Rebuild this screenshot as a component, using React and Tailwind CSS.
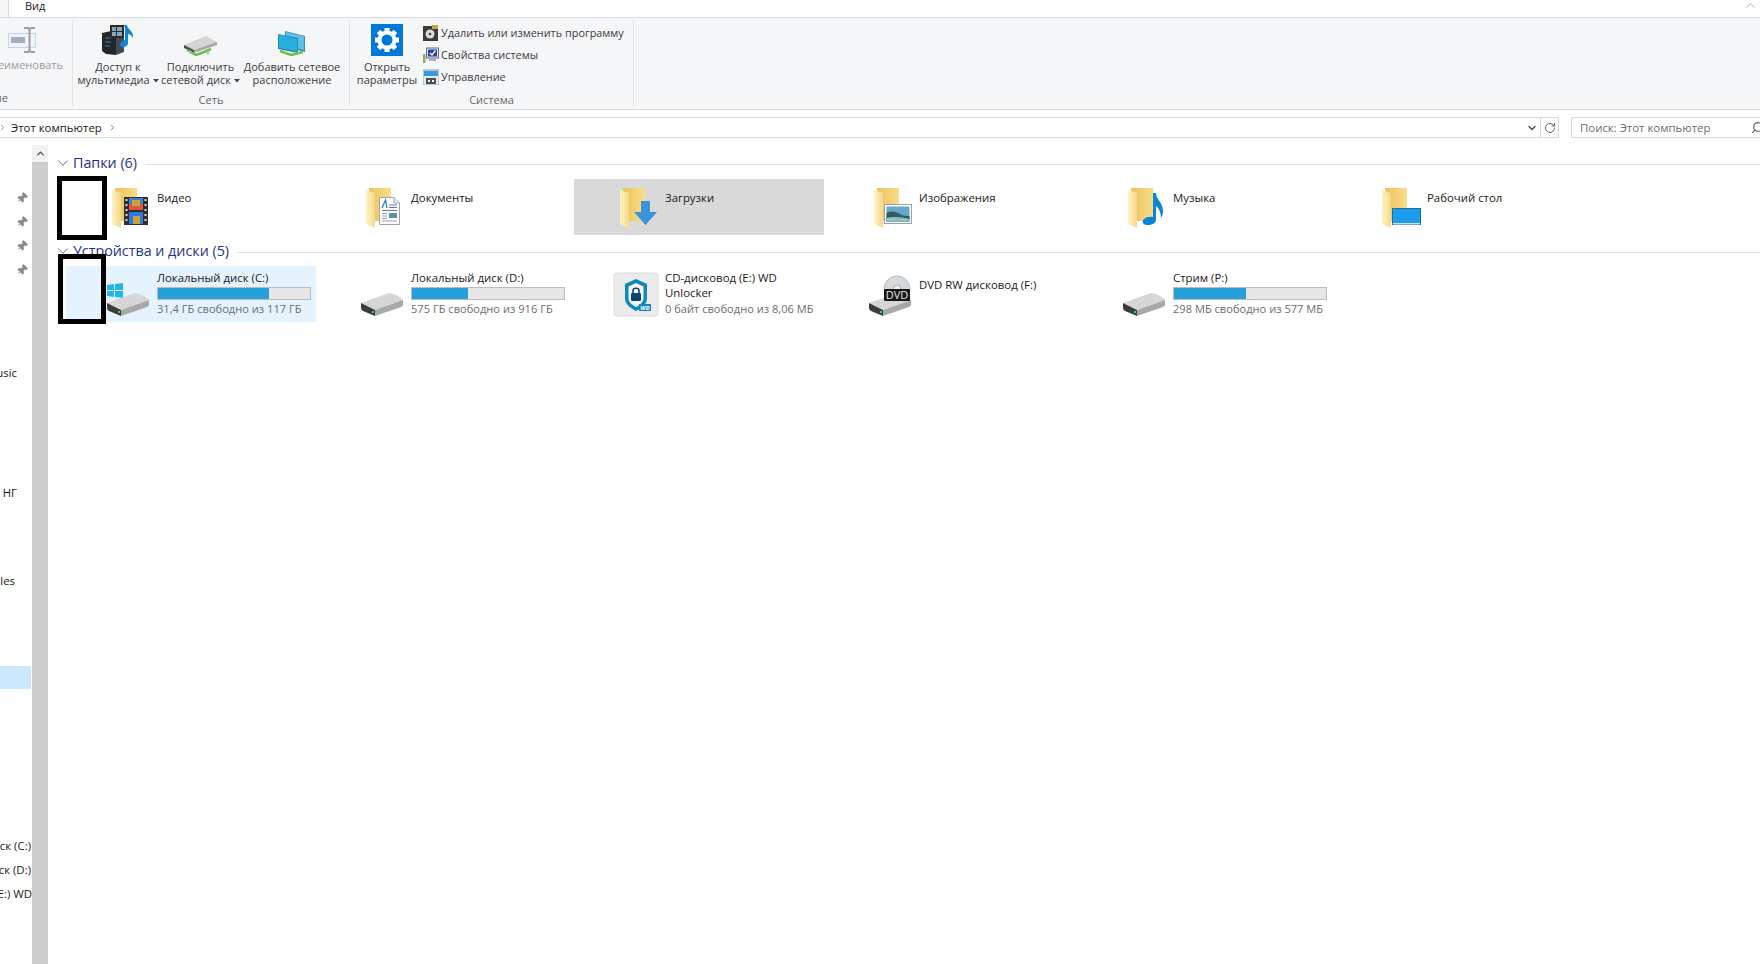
import React from 'react';
import { ChevronDown, ChevronRight, ChevronUp, RotateCw, Search, Pin } from 'lucide-react';

const FONT = 'font-["Open_Sans","Liberation_Sans",sans-serif]';

// --- icons -------------------------------------------------------------

const FolderBase = ({ id }) => (
  <>
    <defs>
      <linearGradient id={`back-${id}`} x1="0" y1="0" x2="1" y2="0">
        <stop offset="0" stopColor="#ecc25c" />
        <stop offset="1" stopColor="#f8dd8a" />
      </linearGradient>
      <linearGradient id={`leaf-${id}`} x1="0" y1="0" x2="1" y2="0">
        <stop offset="0" stopColor="#fff3c4" />
        <stop offset="1" stopColor="#f6d988" />
      </linearGradient>
    </defs>
    <path d="M9 5H31V38H9z" fill={`url(#back-${id})`} />
    <path d="M6 7 15 10V45L6 41z" fill={`url(#leaf-${id})`} />
  </>
);

const VideoFolder = () => (
  <svg width="48" height="48" viewBox="0 0 48 48">
    <FolderBase id="video" />
    <rect x="18" y="14" width="24" height="28" fill="#2e2e2e" />
    <path d="M23 15H37V27H23z" fill="#3f7fd0" />
    <path d="M23 21H37V27H23z" fill="#e0563f" />
    <path d="M23 29H37V41H23z" fill="#2f78e0" />
    <path d="M26 17h8v6h-8zM27 33h7v8h-7z" fill="#c9a23a" />
    <path d="M19.500 16h2v2h-2zM19.500 21h2v2h-2zM19.500 26h2v2h-2zM19.500 31h2v2h-2zM19.500 36h2v2h-2zM38.500 16h2v2h-2zM38.500 21h2v2h-2zM38.500 26h2v2h-2zM38.500 31h2v2h-2zM38.500 36h2v2h-2z" fill="#d8d8d8" />
  </svg>
);

const DocsFolder = () => (
  <svg width="48" height="48" viewBox="0 0 48 48">
    <FolderBase id="docs" />
    <path d="M19.500 14.500H34L39.500 20V41.500H19.500z" fill="#fff" stroke="#9aa4ac" />
    <path d="M34 14.500V20H39.500" fill="#e8eef2" stroke="#9aa4ac" />
    <path d="M22 25 25.500 17 27 25" fill="none" stroke="#1f86c8" strokeWidth="1.300" />
    <path d="M29 22h8M29 24.500h8M22 27.500h15" stroke="#5d7f95" strokeWidth="1" />
    <rect x="29" y="30" width="8" height="5" fill="#5f8fa8" />
    <path d="M22 30.500h5M22 33h5M22 35.500h5M22 38h15" stroke="#8aa0ae" strokeWidth="1" />
  </svg>
);

const DownloadsFolder = () => (
  <svg width="48" height="48" viewBox="0 0 48 48">
    <FolderBase id="down" />
    <path d="M27 18H36V29H43L31.500 42 20 29H27z" fill="#3b93dc" />
  </svg>
);

const ImagesFolder = () => (
  <svg width="48" height="48" viewBox="0 0 48 48">
    <FolderBase id="img" />
    <rect x="16.500" y="21.500" width="27" height="19" fill="#fff" stroke="#9aa0a6" />
    <rect x="18.500" y="23.500" width="23" height="15" fill="#6aa6cc" />
    <path d="M18.500 30C24 27 28 29 32 31S38 33 41.500 33V38.500H18.500z" fill="#2f5f5c" />
    <path d="M18.500 35C26 33 33 34 41.500 36V38.500H18.500z" fill="#8fc0cc" />
  </svg>
);

const MusicFolder = () => (
  <svg width="48" height="48" viewBox="0 0 48 48">
    <FolderBase id="music" />
    <path d="M31 10H34C34 16 41 20 41 28 41 31 40 33 39 35 39 30 37 25 34 23V37C34 40 30 42 25 42 21 42 20 39 21 37 23 34 28 33 31 34z" fill="#0a84d6" />
  </svg>
);

const DesktopFolder = () => (
  <svg width="48" height="48" viewBox="0 0 48 48">
    <FolderBase id="desk" />
    <rect x="16" y="25" width="29" height="17" fill="#1f6f92" />
    <rect x="17" y="26" width="27" height="14" fill="#1c9cf0" />
    <path d="M17 40h27v1.500H17z" fill="#cfe4f0" />
  </svg>
);

const DriveShape = ({ y = 0 }) => (
  <g transform={`translate(1 ${y})`}>
    <path d="M0 10 28 0C34 1 40 4 42 7L14 17z" fill="#d6d6d6" />
    <path d="M0 10 14 17V23L2 18Q0 17 0 15z" fill="#3c3c3c" />
    <path d="M14 17 42 7V12Q42 13 40 14L14 23z" fill="#a8a8a8" />
    <rect x="11" y="18" width="2" height="2" fill="#3fd07a" />
  </g>
);

const DriveIcon = ({ windows }) => (
  <svg width="48" height="48" viewBox="0 0 48 48">
    {windows && <path d="M1 11 8 10V16H1zM9 10 17 9V16H9zM1 17H8V23L1 22zM9 17H17V24L9 23z" fill="#21b5ee" />}
    <DriveShape y={19} />
  </svg>
);

const WdIcon = () => (
  <svg width="48" height="48" viewBox="0 0 48 48" className="overflow-visible">
    <g transform="translate(-1 -3)">
      <rect x="1" y="2" width="44" height="43" rx="3" fill="#ebebeb" stroke="#dcdcdc" />
      <path d="M23 8 34 13V27C34 33 29 37 23 40 17 37 12 33 12 27V13z" fill="#0f87c0" />
      <path d="M23 12 30.500 15.500V27C30.500 31 27 34 23 36 19 34 15.500 31 15.500 27V15.500z" fill="#f4f6f7" />
      <rect x="18" y="22" width="10" height="8" rx="1" fill="#11436f" />
      <path d="M20 22V19.500C20 16.500 26 16.500 26 19.500V22" fill="none" stroke="#11436f" strokeWidth="1.600" />
      <rect x="26" y="33" width="12" height="7" fill="#0f87c0" />
      <text x="32" y="39" fontSize="6" fontWeight="700" fontStyle="italic" fill="#fff" textAnchor="middle" fontFamily="Open Sans, sans-serif">WD</text>
    </g>
  </svg>
);

const DvdIcon = () => (
  <svg width="48" height="48" viewBox="0 0 48 48">
    <circle cx="29" cy="15" r="13" fill="#d6d9dc" stroke="#b9bdc0" />
    <circle cx="29" cy="15" r="4" fill="#eef0f1" stroke="#a9adb0" />
    <DriveShape y={19} />
    <rect x="16" y="15" width="26" height="12" rx="1" fill="#171717" />
    <text x="29" y="25" fontSize="11" fill="#e8e8e8" textAnchor="middle" fontFamily="Open Sans, sans-serif">DVD</text>
  </svg>
);

const RenameIcon = () => (
  <svg width="32" height="28" viewBox="0 0 32 28" className="opacity-85">
    <rect x="1.500" y="7.500" width="27" height="14" fill="#eef3fa" stroke="#bccde3" />
    <rect x="4" y="11" width="14" height="6" fill="#93a3bb" />
    <path d="M17 2h4l1.500 1.500L24 2h4M22.500 3v21M17 26h4l1.500-1.500L24 26h4" fill="none" stroke="#8b9095" strokeWidth="2" />
  </svg>
);

const MediaIcon = () => (
  <svg width="32" height="32" viewBox="0 0 32 32">
    <path d="M0 9 14 6V31L4 30 0 27z" fill="#23272c" />
    <path d="M14 6 22 9V28L14 31z" fill="#454b52" />
    <path d="M3 14h6M3 18h6M3 22h5" stroke="#3d7fb5" strokeWidth="1" />
    <rect x="8" y="1" width="14" height="13" fill="#2b2b2b" />
    <path d="M10 3h4v4h-4zM15 3h5v4h-5zM10 8h4v4h-4zM15 8h5v4h-5z" fill="#8aa7c0" />
    <path d="M22 1H25C25 5 32 7 31 14 29.500 11 27 10 26 10V19C26 22 22 24 19 23 17 21 19 17 23 16V4z" fill="#0f86d8" />
  </svg>
);

const ConnectDriveIcon = () => (
  <svg width="34" height="32" viewBox="0 0 34 32">
    <path d="M0 21 22 12 33 18 10 26z" fill="#d4d4d4" />
    <path d="M0 21 10 26V29L0 24z" fill="#4a4a4a" />
    <path d="M10 26 33 18V21L10 29z" fill="#a8a8a8" />
    <path d="M3 26 12 31 20 28 27 25" fill="none" stroke="#6cc04a" strokeWidth="2.500" />
    <circle cx="6" cy="28" r="1.500" fill="#b9b9b9" />
    <circle cx="24" cy="29" r="1.500" fill="#b9b9b9" />
  </svg>
);

const NetworkIcon = () => (
  <svg width="30" height="32" viewBox="0 0 30 32">
    <path d="M8 7 28 12V28L8 23z" fill="#3f8fb0" />
    <path d="M9 8 27 12.500V26L9 21.500z" fill="#5cc1e8" />
    <path d="M1 10 21 14V29L1 25z" fill="#2a86ae" />
    <path d="M2 11 20 14.700V27.500L2 23.700z" fill="#29aee0" />
    <path d="M3 27 14 31 26 28" fill="none" stroke="#6cc04a" strokeWidth="2.500" />
  </svg>
);

const GearIcon = () => {
  const teeth = [0, 45, 90, 135, 180, 225, 270, 315];
  return (
    <svg width="32" height="32" viewBox="0 0 32 32">
      <rect width="32" height="32" fill="#0078d7" />
      <circle cx="16" cy="16" r="7.500" fill="none" stroke="#fff" strokeWidth="4" />
      {teeth.map((deg) => (
        <rect key={deg} x="13.500" y="4" width="5" height="5" fill="#fff" transform={`rotate(${deg} 16 16)`} />
      ))}
    </svg>
  );
};

const UninstallIcon = () => (
  <svg width="16" height="16" viewBox="0 0 16 16">
    <rect x="0" y="1" width="15" height="15" fill="#3a3a3a" />
    <path d="M9 0h6v4H9z" fill="#c9a04a" />
    <circle cx="7" cy="9" r="4.500" fill="#d9d9d9" />
    <circle cx="7" cy="9" r="1.300" fill="#3a3a3a" />
  </svg>
);

const SystemIcon = () => (
  <svg width="16" height="16" viewBox="0 0 16 16">
    <rect x="3.500" y="1" width="12" height="10" fill="#dfe6f2" stroke="#5f6e86" />
    <rect x="5" y="2.500" width="9" height="7" fill="#2a3fa8" />
    <path d="M7 6 9 8 12.500 3.500" fill="none" stroke="#fff" strokeWidth="1.300" />
    <path d="M6 12h7v2H6z" fill="#a9b0b8" />
    <rect x="0" y="7" width="2.500" height="9" fill="#8fae5c" />
  </svg>
);

const ManageIcon = () => (
  <svg width="16" height="16" viewBox="0 0 16 16">
    <rect x="0" y="1" width="16" height="15" fill="#e4eef7" stroke="#7f9fb8" />
    <rect x="1" y="2" width="14" height="5" fill="#3c96d8" />
    <rect x="3" y="9" width="10" height="6" fill="#4a4f55" />
    <path d="M5 11h2v2H5zM9 11h2v2H9z" fill="#fff" />
  </svg>
);

const Caret = () => (
  <svg width="6" height="4" viewBox="0 0 6 4" className="ml-[3px] inline-block align-middle">
    <path d="M0 0H6L3 3.500z" fill="#444" />
  </svg>
);

// --- ribbon ------------------------------------------------------------

const RibbonButton = ({ icon, lines, caret, className = 'w-[84px]' }) => (
  <div className={`flex flex-col items-center ${className}`}>
    <div className="h-[32px] mt-[6px] flex items-end justify-center">{icon}</div>
    <div className="mt-[4px] text-center leading-[13px] whitespace-nowrap text-[#3c3c3c]">
      {lines.map((l, i) => (
        <div key={i}>
          {l}
          {caret && i === lines.length - 1 && <Caret />}
        </div>
      ))}
    </div>
  </div>
);

const Ribbon = () => (
  <div className="h-[92px] flex shrink-0 bg-[#f5f6f7] border-b border-[#dadbdc] text-[11px]">
    <div className="w-[73px] shrink-0 flex flex-col border-r border-[#e2e4e7] mt-[2px] mb-[3px] overflow-hidden">
      <div className="h-[69px] flex flex-col -mt-[2px]">
        <div className="h-[32px] mt-[8px] pl-[7px]">
          <RenameIcon />
        </div>
        <div className="flex justify-end pr-[9px] text-[#9c9c9c] leading-[13px] whitespace-nowrap">
          <span className="shrink-0">Переименовать</span>
        </div>
      </div>
      <div className="flex justify-end pr-[64px] mt-[5px] text-[#666] leading-[16px] whitespace-nowrap">
        <span className="shrink-0">Расположение</span>
      </div>
    </div>

    <div className="w-[277px] shrink-0 flex flex-col border-r border-[#e2e4e7] mt-[2px] mb-[3px]">
      <div className="h-[69px] flex pl-[3px] -mt-[2px]">
        <RibbonButton icon={<MediaIcon />} lines={['Доступ к', 'мультимедиа']} caret />
        <RibbonButton icon={<ConnectDriveIcon />} lines={['Подключить', 'сетевой диск']} caret className="w-[81px]" />
        <RibbonButton icon={<NetworkIcon />} lines={['Добавить сетевое', 'расположение']} className="w-[102px]" />
      </div>
      <div className="mt-[6px] text-center text-[#666] leading-[16px]">Сеть</div>
    </div>

    <div className="w-[284px] shrink-0 flex flex-col border-r border-[#e2e4e7] mt-[2px] mb-[3px]">
      <div className="h-[69px] flex pl-[7px] -mt-[2px]">
        <RibbonButton icon={<GearIcon />} lines={['Открыть', 'параметры']} className="w-[60px]" />
        <div className="ml-[6px] pt-[4px] flex flex-col text-[#3c3c3c] text-[10.900px]">
          {[
            [<UninstallIcon key="u" />, 'Удалить или изменить программу'],
            [<SystemIcon key="s" />, 'Свойства системы'],
            [<ManageIcon key="m" />, 'Управление'],
          ].map(([icon, label]) => (
            <div key={label} className="h-[22px] shrink-0 flex items-center gap-[2px] whitespace-nowrap">
              {icon}
              {label}
            </div>
          ))}
        </div>
      </div>
      <div className="mt-[5px] text-center text-[#666] leading-[16px]">Система</div>
    </div>
  </div>
);

// --- address bar -------------------------------------------------------

const AddressBar = () => (
  <div className="shrink-0 flex mt-[7px] h-[21px] text-[11.400px]">
    <div className="flex-1 flex items-center border-y border-r border-[#d9d9d9]">
      <ChevronRight size={9} strokeWidth={2} className="text-[#777] -ml-[2px] mr-[3px]" />
      <span className="text-[#1a1a1a] ml-[1px]">Этот компьютер</span>
      <ChevronRight size={9} strokeWidth={2} className="text-[#555] ml-[6px]" />
      <ChevronDown size={12} strokeWidth={3} className="ml-auto mr-[2px] text-[#555]" />
      <div className="h-full border-l border-[#d9d9d9] w-[18px] flex items-center justify-center">
        <RotateCw size={12} strokeWidth={2} className="text-[#666]" />
      </div>
    </div>
    <div className="ml-[12px] w-[189px] flex items-center border-y border-l border-[#d9d9d9] pl-[8px] overflow-hidden">
      <span className="text-[#6d6d6d]">Поиск: Этот компьютер</span>
      <Search size={13} strokeWidth={2} className="ml-auto -mr-[4px] -scale-x-100 text-[#555]" />
    </div>
  </div>
);

// --- left pane ---------------------------------------------------------

const ClippedRow = ({ children, className = '' }) => (
  <div className={`h-[24px] flex items-center justify-end overflow-hidden whitespace-nowrap text-[#1a1a1a] ${className}`}>
    <span className="shrink-0">{children}</span>
  </div>
);

const Sidebar = () => (
  <div className="w-[32px] shrink-0 flex flex-col text-[11.400px]">
    <div className="mt-[48px] flex flex-col items-end pr-[4px]">
      {[0, 1, 2, 3].map((i) => (
        <div key={i} className="h-[24px] flex items-center">
          <Pin size={12} fill="#8a8a8a" strokeWidth={1.500} className="text-[#8a8a8a] rotate-45" />
        </div>
      ))}
    </div>
    <ClippedRow className="mt-[79px] pr-[15px]">Music</ClippedRow>
    <ClippedRow className="mt-[96px] pr-[15px]">НГ</ClippedRow>
    <ClippedRow className="mt-[64px] pr-[17px]">les</ClippedRow>
    <div className="mt-[73px] h-[23px] mr-[1px] bg-[#cce8ff]" />
    <ClippedRow className="mt-[145px] pr-[1px]">Локальный диск (C:)</ClippedRow>
    <ClippedRow className="pr-[1px]">Локальный диск (D:)</ClippedRow>
    <ClippedRow className="pr-[0px]">CD-дисковод (E:) WD</ClippedRow>
  </div>
);

const Scrollbar = () => (
  <div className="w-[16px] shrink-0 flex flex-col pt-[7px]">
    <div className="h-[17px] bg-[#f1f1f1] flex items-center justify-center">
      <ChevronUp size={11} strokeWidth={3} className="text-[#505050]" />
    </div>
    <div className="flex-1 bg-[#cdcdcd]" />
  </div>
);

// --- content -----------------------------------------------------------

const SectionHeader = ({ children, className = '' }) => (
  <div className={`h-[22px] flex items-center pl-[6px] ${className}`}>
    <ChevronDown size={18} strokeWidth={1.100} className="text-[#3c4c66] -mt-[2px]" />
    <span className="ml-[1px] -mt-[2px] text-[14.300px] text-[#1e3287] whitespace-nowrap">{children}</span>
    <div className="flex-1 ml-[8px] h-px bg-[#e2e2e2]" />
  </div>
);

const folders = [
  { name: 'Видео', icon: <VideoFolder /> },
  { name: 'Документы', icon: <DocsFolder /> },
  { name: 'Загрузки', icon: <DownloadsFolder />, hovered: true },
  { name: 'Изображения', icon: <ImagesFolder /> },
  { name: 'Музыка', icon: <MusicFolder /> },
  { name: 'Рабочий стол', icon: <DesktopFolder /> },
];

const drives = [
  { name: 'Локальный диск (C:)', free: '31,4 ГБ свободно из 117 ГБ', used: 73, icon: <DriveIcon windows />, selected: true },
  { name: 'Локальный диск (D:)', free: '575 ГБ свободно из 916 ГБ', used: 37, icon: <DriveIcon /> },
  { name: 'CD-дисковод (E:) WD Unlocker', free: '0 байт свободно из 8,06 МБ', icon: <WdIcon /> },
  { name: 'DVD RW дисковод (F:)', icon: <DvdIcon /> },
  { name: 'Стрим (P:)', free: '298 МБ свободно из 577 МБ', used: 47.500, icon: <DriveIcon /> },
];

const FolderTile = ({ name, icon, hovered }) => (
  <div className={`h-[56px] flex pl-[40px] ${hovered ? 'bg-[#d9d9d9]' : ''}`}>
    <div className="w-[48px] mt-[4px] shrink-0">{icon}</div>
    <div className="ml-[3px] pt-[11px] text-[#1a1a1a] leading-[16px]">{name}</div>
  </div>
);

const DriveTile = ({ name, free, used, icon, selected }) => (
  <div className={`h-[56px] flex pl-[40px] ${selected ? 'bg-[#e5f3ff]' : ''}`}>
    <div className="w-[48px] mt-[8px] shrink-0">{icon}</div>
    <div className={`ml-[3px] w-[154px] ${free ? 'pt-[4px]' : 'pt-[11px]'}`}>
      <div className="text-[#1a1a1a] leading-[15px]">{name}</div>
      {used !== undefined && (
        <div className="mt-[2px] h-[13px] border border-[#bcbcbc] bg-[#e6e6e6]">
          <div className="h-full bg-[#26a0da]" style={{ width: `${used}%` }} />
        </div>
      )}
      {free && <div className="mt-[1px] text-[11.100px] text-[#6d6d6d] leading-[16px] whitespace-nowrap">{free}</div>}
    </div>
  </div>
);

const Content = () => (
  <div className="flex-1 pt-[15px] text-[11.400px]">
    <SectionHeader>Папки (6)</SectionHeader>
    <div className="mt-[4px] ml-[18px] grid grid-cols-[repeat(6,250px)] gap-x-[4px]">
      {folders.map((f) => (
        <FolderTile key={f.name} {...f} />
      ))}
    </div>
    <SectionHeader className="mt-[6px]">Устройства и диски (5)</SectionHeader>
    <div className="mt-[3px] ml-[18px] grid grid-cols-[repeat(6,250px)] gap-x-[4px]">
      {drives.map((d) => (
        <DriveTile key={d.name} {...d} />
      ))}
    </div>
  </div>
);

export default function App() {
  return (
    <div className={`relative w-screen h-screen overflow-hidden flex flex-col bg-white ${FONT}`}>
      {/* tab strip, cut off by the top of the picture */}
      <div className="h-[18px] flex shrink-0 text-[11px]">
        <div className="w-[9px] bg-[#f5f6f7] border-r border-b border-[#dadbdc]" />
        <div className="flex-1 flex justify-between border-b border-[#dadbdc] pl-[16px] pr-[2px]">
          <span className="leading-[12px] text-[#1a1a1a]">Вид</span>
          <ChevronUp size={15} strokeWidth={1} className="text-[#8a8a8a] -mt-[2px]" />
        </div>
      </div>
      <Ribbon />
      <AddressBar />
      <div className="flex-1 flex min-h-0">
        <Sidebar />
        <Scrollbar />
        <Content />
      </div>

      {/* black frames lying over the first tile of each row */}
      <div className="absolute left-[57px] top-[176px] w-[50px] h-[64px] border-[5px] border-black bg-white" />
      <div className="absolute left-[58px] top-[254px] w-[48px] h-[70px] border-[5px] border-black bg-white">
        <div className="ml-[3px] mt-[7px] h-[53px] bg-[#e5f3ff]" />
      </div>
    </div>
  );
}
